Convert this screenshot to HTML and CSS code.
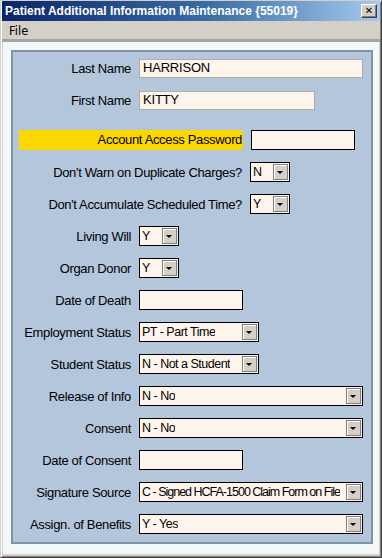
FILE: index.html
```html
<!DOCTYPE html>
<html lang="en">
<head>
<meta charset="UTF-8" />
<title>Patient Additional Information Maintenance</title>
<link rel="stylesheet" href="styles.css">
</head>
<body>

<div class="window">
  <div class="titlebar">
    <span class="title">Patient Additional Information Maintenance {55019}</span>
    <span class="close">&#x2715;</span>
  </div>
  <div class="menubar"><span class="menu">File</span></div>

  <div class="content">
    <div class="panel">
      <div class="row">
        <label class="lbl">Last Name</label>
        <div class="field name w-full">HARRISON</div>
      </div>
      <div class="row">
        <label class="lbl">First Name</label>
        <div class="field name w-first">KITTY</div>
      </div>
      <div class="row wide pw">
        <label class="lbl hilite">Account Access Password</label>
        <div class="field w-pw"></div>
      </div>
      <div class="row wide">
        <label class="lbl">Don't Warn on Duplicate Charges?</label>
        <div class="field combo w-yn"><span>N</span><i class="btn"></i></div>
      </div>
      <div class="row wide">
        <label class="lbl">Don't Accumulate Scheduled Time?</label>
        <div class="field combo w-yn"><span>Y</span><i class="btn"></i></div>
      </div>
      <div class="row">
        <label class="lbl">Living Will</label>
        <div class="field combo w-yn"><span>Y</span><i class="btn"></i></div>
      </div>
      <div class="row">
        <label class="lbl">Organ Donor</label>
        <div class="field combo w-yn"><span>Y</span><i class="btn"></i></div>
      </div>
      <div class="row">
        <label class="lbl">Date of Death</label>
        <div class="field w-date"></div>
      </div>
      <div class="row">
        <label class="lbl">Employment Status</label>
        <div class="field combo w-mid"><span>PT - Part Time</span><i class="btn"></i></div>
      </div>
      <div class="row">
        <label class="lbl">Student Status</label>
        <div class="field combo w-mid"><span>N - Not a Student</span><i class="btn"></i></div>
      </div>
      <div class="row">
        <label class="lbl">Release of Info</label>
        <div class="field combo w-full"><span>N - No</span><i class="btn"></i></div>
      </div>
      <div class="row">
        <label class="lbl">Consent</label>
        <div class="field combo w-full"><span>N - No</span><i class="btn"></i></div>
      </div>
      <div class="row">
        <label class="lbl">Date of Consent</label>
        <div class="field w-date"></div>
      </div>
      <div class="row">
        <label class="lbl">Signature Source</label>
        <div class="field combo w-full"><span class="tight">C - Signed HCFA-1500 Claim Form on File</span><i class="btn"></i></div>
      </div>
      <div class="row">
        <label class="lbl">Assign. of Benefits</label>
        <div class="field combo w-full"><span>Y - Yes</span><i class="btn"></i></div>
      </div>
    </div>
  </div>
</div>

</body>
</html>
```

FILE: styles.css
```css
* {
  box-sizing: border-box;
}
body {
  margin: 0;
  background: #d4d0c8;
  font-family: "Liberation Sans", Arial, sans-serif;
}
.window {
  width: 382px;
  height: 558px;
  border-top: 1px solid #d4d0c8;
  border-left: 1px solid #d4d0c8;
  border-right: 1px solid #404040;
  border-bottom: 1px solid #404040;
  box-shadow: inset 1px 1px 0 #ffffff, inset -1px -1px 0 #808080;
  padding: 0 2px 2px 2px;
  display: flex;
  flex-direction: column;
}
.titlebar {
  height: 20px;
  margin: 0 -1px 0 -1px;
  background: linear-gradient(to right, #0a246a, #3a6ea5 55%, #a6caf0);
  display: flex;
  align-items: center;
  justify-content: space-between;
  padding: 0 3px 0 3px;
}
.title {
  color: #fff;
  font-family: "Liberation Sans", Tahoma, sans-serif;
  font-weight: bold;
  font-size: 12px;
}
.close {
  width: 16px;
  height: 14px;
  background: #d4d0c8;
  border: 1px solid;
  border-color: #fff #404040 #404040 #fff;
  box-shadow: inset -1px -1px 0 #808080;
  font-size: 10px;
  font-weight: bold;
  line-height: 12px;
  text-align: center;
  color: #000;
  font-family: "DejaVu Sans", sans-serif;
}
.menubar {
  height: 21px;
  margin: 0 -1px;
  background: #d4d0c8;
  display: flex;
  align-items: center;
  border-bottom: 3px solid #a4a4a4;
}
.menu {
  font-family: "DejaVu Sans", Tahoma, sans-serif;
  font-size: 11.5px;
  padding-left: 7px;
  padding-top: 2px;
}
.content {
  flex: 1;
  background: #f3f8fb;
  border-bottom: 1px solid #d4d0c8;
  padding: 8px 6px 9px 8px;
}
.panel {
  height: 494px;
  background: #b3c6dc;
  border: 2px solid #8092a8;
  padding: 6px 0 0 0;
  display: flex;
  flex-direction: column;
  gap: 12px;
}
.row {
  display: flex;
  align-items: center;
  gap: 8px;
  height: 20px;
}
.lbl {
  width: 118px;
  text-align: right;
  font-size: 13px;
  color: #000;
  letter-spacing: -0.35px;
  white-space: nowrap;
}
.wide .lbl {
  width: 229px;
}
.pw {
  margin-top: 8px;
}
.pw .lbl {
  width: 224px;
  margin-left: 6px;
  background: #fdd700;
  height: 20px;
  line-height: 20px;
  padding-right: 1px;
}
.field {
  height: 20px;
  background: #fdf5ec;
  border: 1px solid #000;
  font-size: 12.5px;
  letter-spacing: -0.5px;
  padding-left: 2px;
  line-height: 18px;
  display: flex;
  align-items: center;
  justify-content: space-between;
  white-space: nowrap;
}
.field.name {
  height: 19px;
  border-color: #b4aca2;
  padding-left: 3px;
  font-size: 13px;
  letter-spacing: -0.2px;
}
.combo span {
  overflow: hidden;
}
.combo .tight {
  letter-spacing: -1px;
}
.btn {
  width: 15px;
  height: 16px;
  margin-right: 1px;
  background: #d4d0c8;
  border: 1px solid #808080;
  box-shadow: inset 1px 1px 0 #fff;
  position: relative;
  flex-shrink: 0;
}
.btn::after {
  content: "";
  position: absolute;
  left: 3px;
  top: 6px;
  border-left: 3px solid transparent;
  border-right: 3px solid transparent;
  border-top: 3px solid #000;
}
.w-full { width: 224px; }
.w-first { width: 176px; }
.w-pw { width: 104px; }
.w-yn { width: 40px; }
.w-date { width: 104px; }
.w-mid { width: 120px; }
```
